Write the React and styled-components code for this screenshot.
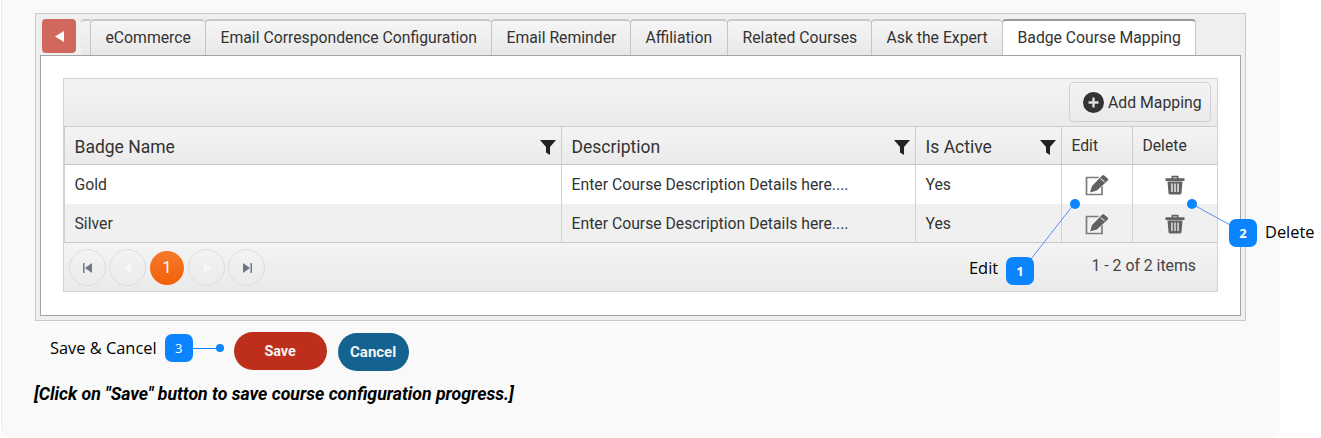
import React from "react";
import styled, { createGlobalStyle } from "styled-components";

const tabs = [
  { label: "eCommerce", width: 115 },
  { label: "Email Correspondence Configuration", width: 286 },
  { label: "Email Reminder", width: 139 },
  { label: "Affiliation", width: 97 },
  { label: "Related Courses", width: 144 },
  { label: "Ask the Expert", width: 131 },
  { label: "Badge Course Mapping", width: 194 },
];

const rows = [
  { name: "Gold", desc: "Enter Course Description Details here....", active: "Yes" },
  { name: "Silver", desc: "Enter Course Description Details here....", active: "Yes" },
];

const COLS = "497px 354px 146px 71px 85px";

function Funnel() {
  return (
    <FilterIcon viewBox="0 0 16 15">
      <path d="M0 0h16L10 7v8L6 12.5V7z" fill="#222" />
    </FilterIcon>
  );
}

function EditIcon() {
  return (
    <svg width="24" height="22" viewBox="0 0 24 22">
      <path d="M1.500 3.500h15.500v17H1.500z" fill="none" stroke="#7c7c7c" strokeWidth="1.700" />
      <path d="M3.500 19.500l2.500-8L17 0l7 5.500L12.500 17z" fill="#fff" />
      <path
        d="M5 18.500l2-6.500L17.200 1.600q1-1 2 0l3.600 2.900q1 1 0 2L12 16.500z"
        fill="#626262"
      />
      <path d="M15.800 4.800l3.800 3" stroke="#fff" strokeWidth="1" />
    </svg>
  );
}

function TrashIcon() {
  return (
    <svg width="20" height="20" viewBox="0 0 20 20">
      <path d="M0.500 3.200h19v2.700H.5z M6.500 3.500V.8h7v2.700h-1.700V2.400H8.200v1.100z" fill="#626262" />
      <path
        d="M2.500 6.500h15l-1 11.500q-.2 1.500-1.600 1.500H5.100Q3.700 19.500 3.500 18zM6.300 8.500v8.500h1.300V8.500zM9.350 8.500v8.500h1.300V8.500zM12.400 8.500v8.500h1.300V8.500z"
        fill="#626262"
        fillRule="evenodd"
      />
    </svg>
  );
}

function PagerGlyph({ type }) {
  const paths = {
    first: "M1 1h1.500v10H1zM3 6l7-5v10z",
    prev: "M2 6l7-5v10z",
    next: "M3 1l7 5-7 5z",
    last: "M2 1l7 5-7 5zM9.500 1H11v10H9.500z",
  };
  const faded = type === "prev" || type === "next";
  return (
    <svg width="12" height="12" viewBox="0 0 12 12">
      <path d={paths[type]} fill={faded ? "#f8f8f8" : "#6f7780"} />
    </svg>
  );
}

export default function App() {
  return (
    <>
      <GlobalStyle />
      <Panel>
        <TabStrip>
          <TabRow>
            <BackButton>
              <svg width="9" height="11" viewBox="0 0 9 11">
                <path d="M0 5.500L9 0v11z" fill="#fff" />
              </svg>
            </BackButton>
            <TabStub />
            {tabs.map((t, i) => (
              <Tab key={t.label} $width={t.width} $active={i === tabs.length - 1}>
                {t.label}
              </Tab>
            ))}
          </TabRow>
          <TabContent>
            <Grid>
              <Toolbar>
                <AddButton>
                  <svg width="21" height="21" viewBox="0 0 21 21">
                    <circle cx="10.500" cy="10.500" r="10.500" fill="#333" />
                    <path d="M9.300 5.500h2.400v3.800h3.800v2.400h-3.800v3.800H9.300v-3.800H5.500V9.300h3.800z" fill="#ddd" />
                  </svg>
                  Add Mapping
                </AddButton>
              </Toolbar>
              <HeaderRow>
                <HeaderCell>
                  Badge Name
                  <Funnel />
                </HeaderCell>
                <HeaderCell>
                  Description
                  <Funnel />
                </HeaderCell>
                <HeaderCell>
                  Is Active
                  <Funnel />
                </HeaderCell>
                <SmallHeaderCell>Edit</SmallHeaderCell>
                <SmallHeaderCell>Delete</SmallHeaderCell>
              </HeaderRow>
              {rows.map((r, i) => (
                <Row key={r.name} $alt={i % 2 === 1}>
                  <Cell>{r.name}</Cell>
                  <Cell>{r.desc}</Cell>
                  <Cell>{r.active}</Cell>
                  <IconCell>
                    <EditIcon />
                  </IconCell>
                  <IconCell>
                    <TrashIcon />
                  </IconCell>
                </Row>
              ))}
              <Pager>
                <PagerButton>
                  <PagerGlyph type="first" />
                </PagerButton>
                <PagerButton>
                  <PagerGlyph type="prev" />
                </PagerButton>
                <CurrentPage>1</CurrentPage>
                <PagerButton>
                  <PagerGlyph type="next" />
                </PagerButton>
                <PagerButton>
                  <PagerGlyph type="last" />
                </PagerButton>
                <PagerInfo>1 - 2 of 2 items</PagerInfo>
              </Pager>
            </Grid>
          </TabContent>
        </TabStrip>

        <ActionRow>
          <CalloutText>Save &amp; Cancel</CalloutText>
          <ActionBadge>3</ActionBadge>
          <Connector />
          <ActionDot />
          <SaveButton>Save</SaveButton>
          <CancelButton>Cancel</CancelButton>
        </ActionRow>
        <Note>[Click on "Save" button to save course configuration progress.]</Note>

        {/* annotation overlay */}
        <Lines width="1321" height="438">
          <line x1="1074" y1="204" x2="1031" y2="259" stroke="#5b8ff0" strokeWidth="1" />
          <line x1="1192" y1="204" x2="1232" y2="226" stroke="#5b8ff0" strokeWidth="1" />
        </Lines>
        <Dot $x={1069.5} $y={198.5} />
        <Dot $x={1186.5} $y={198.5} />
        <FloatBadge $x={1006} $y={257}>1</FloatBadge>
        <FloatBadge $x={1229} $y={219}>2</FloatBadge>
        <FloatLabel $x={969} $y={258}>Edit</FloatLabel>
        <FloatLabel $x={1265} $y={222}>Delete</FloatLabel>
      </Panel>
    </>
  );
}

const GlobalStyle = createGlobalStyle`
  html, body {
    margin: 0;
    padding: 0;
    background: #fff;
    font-family: Roboto, "Liberation Sans", sans-serif;
    overflow: hidden;
  }
`;

const Panel = styled.div`
  position: relative;
  box-sizing: border-box;
  width: 1279px;
  height: 438px;
  margin-left: 1px;
  padding: 13px 0 0 33px;
  background: #f9f9f9;
  border-left: 1px solid #ececec;
  border-bottom-left-radius: 12px;
  border-bottom-right-radius: 10px;
`;

const TabStrip = styled.div`
  box-sizing: border-box;
  width: 1211px;
  height: 308px;
  padding: 5px 4px 4px 4px;
  background: #efefef;
  border: 1px solid #c9c9c9;
`;

const TabRow = styled.div`
  display: flex;
  align-items: flex-start;
  height: 36px;
  padding-left: 2px;
`;

const BackButton = styled.div`
  display: flex;
  align-items: center;
  justify-content: center;
  width: 34px;
  height: 34px;
  margin-right: 5px;
  background: #d0695c;
  border-radius: 4px;
`;

const TabStub = styled.div`
  box-sizing: border-box;
  width: 9px;
  height: 36px;
  background: linear-gradient(#f4f4f4, #e9e8e9);
  border-top: 2px solid #c8c8c8;
  border-top-left-radius: 4px;
`;

const Tab = styled.div`
  box-sizing: border-box;
  width: ${(p) => p.$width}px;
  height: 36px;
  padding: 0 0 2px 14.5px;
  display: flex;
  align-items: center;
  font-size: 15.75px;
  color: #333;
  white-space: nowrap;
  border: 1px solid #c4c4c4;
  border-top: 2px solid ${(p) => (p.$active ? "#999" : "#c8c8c8")};
  border-bottom: 0;
  border-right-width: ${(p) => (p.$active ? "1px" : "0")};
  border-radius: 4px 4px 0 0;
  background: ${(p) => (p.$active ? "#fff" : "linear-gradient(#f5f5f5, #e9e8e9)")};
  position: relative;
  z-index: 1;
`;

const TabContent = styled.div`
  box-sizing: border-box;
  height: 261px;
  padding: 22px 22px 0 22px;
  background: #fff;
  border: 1px solid #a3a3a3;
`;

const Grid = styled.div`
  box-sizing: border-box;
  width: 1155px;
  height: 214px;
  border: 1px solid #d2d2d2;
  background: #f0f0f0;
`;

const Toolbar = styled.div`
  display: flex;
  justify-content: flex-end;
  box-sizing: border-box;
  height: 47px;
  padding: 3px 6px 0 0;
  background: linear-gradient(#f4f4f4, #ebeaeb);
`;

const AddButton = styled.div`
  box-sizing: border-box;
  display: flex;
  align-items: center;
  gap: 4px;
  width: 142px;
  height: 40px;
  padding-left: 13px;
  font-size: 15.8px;
  color: #333;
  background: linear-gradient(#f3f3f3, #ebeaeb);
  border: 1px solid #d0d0d0;
  border-radius: 5px;
`;

const HeaderRow = styled.div`
  display: grid;
  grid-template-columns: ${COLS};
  height: 39px;
  border-top: 1px solid #cdcdcd;
  border-bottom: 1px solid #c8c8c8;
  box-sizing: border-box;
  background: linear-gradient(#f4f4f4, #ebeaeb);
`;

const HeaderCell = styled.div`
  display: flex;
  align-items: center;
  justify-content: space-between;
  box-sizing: border-box;
  padding: 2px 5px 0 9.5px;
  font-size: 17.5px;
  color: #333;
  border-left: 1px solid #cdcdcd;
`;

const SmallHeaderCell = styled(HeaderCell)`
  padding-top: 0;
  font-size: 15.7px;
`;

const FilterIcon = styled.svg`
  width: 16px;
  height: 15px;
  margin-top: 1px;
`;

const Row = styled.div`
  display: grid;
  grid-template-columns: ${COLS};
  height: 39px;
  background: ${(p) => (p.$alt ? "#f0f0f0" : "#fff")};
`;

const Cell = styled.div`
  display: flex;
  align-items: center;
  box-sizing: border-box;
  padding: 0 0 0 9.5px;
  font-size: 15.75px;
  color: #333;
  border-left: 1px solid #d2d2d2;
  white-space: nowrap;
`;

const IconCell = styled(Cell)`
  justify-content: center;
  padding: 0;
`;

const Pager = styled.div`
  display: flex;
  align-items: center;
  gap: 3px;
  box-sizing: border-box;
  height: 49px;
  margin-top: -1px;
  padding: 1px 21px 0 5px;
  border-top: 1px solid #c8c8c8;
  background: linear-gradient(#f4f4f4, #ebeaeb);
`;

const PagerButton = styled.div`
  box-sizing: border-box;
  display: flex;
  align-items: center;
  justify-content: center;
  width: 37px;
  height: 37px;
  border: 1px solid #dcdcdc;
  border-radius: 50%;
`;

const CurrentPage = styled.div`
  display: flex;
  align-items: center;
  justify-content: center;
  width: 34px;
  height: 34px;
  margin: 0 1px;
  border-radius: 50%;
  font-size: 16px;
  color: #fff;
  background: linear-gradient(#f47a2b, #f35f08);
`;

const PagerInfo = styled.div`
  margin-left: auto;
  margin-bottom: 4px;
  font-size: 15.8px;
  color: #444;
`;

const ActionRow = styled.div`
  display: flex;
  align-items: center;
  height: 40px;
  margin-top: 10px;
  padding-left: 15px;
`;

const CalloutText = styled.div`
  font-family: "Open Sans", sans-serif;
  font-size: 16.4px;
  color: #000;
  margin: -8px 8px 0 0;
  white-space: nowrap;
`;

const Badge = styled.div`
  box-sizing: border-box;
  display: flex;
  align-items: center;
  justify-content: center;
  width: 28px;
  height: 28px;
  border-radius: 7px;
  background: #0a84ff;
  color: #fff;
  font-family: "Open Sans", sans-serif;
  font-size: 13px;
`;

const ActionBadge = styled(Badge)`
  margin-top: -6px;
  flex: none;
`;

const Connector = styled.div`
  width: 24px;
  height: 1px;
  margin-top: -6px;
  background: #0a84ff;
`;

const ActionDot = styled.div`
  width: 8px;
  height: 8px;
  margin: -6px 10px 0 -1px;
  border-radius: 50%;
  background: #0a84ff;
`;

const RoundButton = styled.div`
  display: flex;
  align-items: center;
  justify-content: center;
  height: 38px;
  border-radius: 19px;
  color: #f4f4f4;
  font-weight: 700;
`;

const SaveButton = styled(RoundButton)`
  width: 93px;
  font-size: 14.4px;
  background: #bd2f1c;
`;

const CancelButton = styled(RoundButton)`
  width: 71px;
  margin: 2px 0 0 11px;
  font-size: 15px;
  background: #13628f;
`;

const Note = styled.div`
  margin: 13px 0 0 -1px;
  line-height: 20px;
  font-size: 17.7px;
  font-weight: 700;
  font-style: italic;
  color: #000;
  white-space: nowrap;
`;

const Lines = styled.svg`
  position: absolute;
  left: -2px;
  top: 0;
  pointer-events: none;
`;

const Dot = styled.div`
  position: absolute;
  left: ${(p) => p.$x - 2}px;
  top: ${(p) => p.$y}px;
  width: 10px;
  height: 10px;
  border-radius: 50%;
  background: #0a84ff;
`;

const FloatBadge = styled(Badge)`
  position: absolute;
  left: ${(p) => p.$x - 2}px;
  top: ${(p) => p.$y}px;
  font-weight: 700;
`;

const FloatLabel = styled.div`
  position: absolute;
  left: ${(p) => p.$x - 2}px;
  top: ${(p) => p.$y}px;
  font-family: "Open Sans", sans-serif;
  font-size: 16.4px;
  line-height: 20px;
  color: #000;
`;
